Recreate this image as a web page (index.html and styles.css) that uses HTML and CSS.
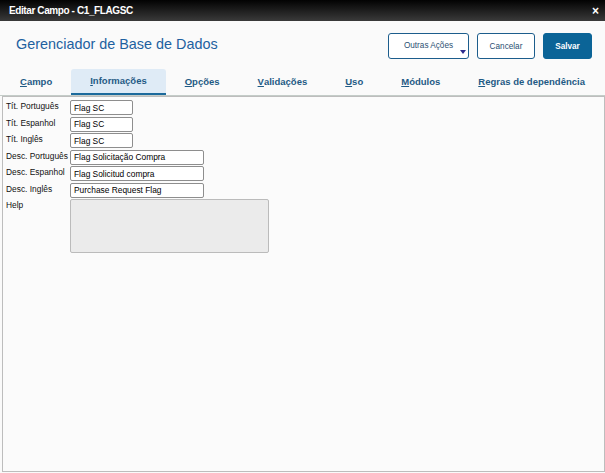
FILE: index.html
```html
<!DOCTYPE html>
<html lang="pt">
<head>
  <meta charset="UTF-8" />
  <title>Editar Campo - C1_FLAGSC</title>
  <link rel="stylesheet" href="styles.css">
</head>
<body>
  <div class="dialog">
    <div class="titlebar">
      <span class="title">Editar Campo - C1_FLAGSC</span>
      <span class="close">×</span>
    </div>

    <div class="header">
      <h1>Gerenciador de Base de Dados</h1>
      <div class="actions">
        <button class="btn btn-more">Outras Ações<span class="caret"></span></button>
        <button class="btn">Cancelar</button>
        <button class="btn btn-primary">Salvar</button>
      </div>
    </div>

    <ul class="tabs">
      <li><u>C</u>ampo</li>
      <li class="active"><u>I</u>nformações</li>
      <li><u>O</u>pções</li>
      <li><u>V</u>alidações</li>
      <li><u>U</u>so</li>
      <li><u>M</u>ódulos</li>
      <li><u>R</u>egras de dependência</li>
    </ul>

    <div class="panel">
      <div class="row"><label>Tít. Português</label><input class="short" value="Flag SC"></div>
      <div class="row"><label>Tít. Espanhol</label><input class="short" value="Flag SC"></div>
      <div class="row"><label>Tít. Inglês</label><input class="short" value="Flag SC"></div>
      <div class="row"><label>Desc. Português</label><input class="long" value="Flag Solicitação Compra"></div>
      <div class="row"><label>Desc. Espanhol</label><input class="long" value="Flag Solicitud compra"></div>
      <div class="row"><label>Desc. Inglês</label><input class="long" value="Purchase Request Flag"></div>
      <div class="row"><label>Help</label><textarea class="help"></textarea></div>
    </div>
  </div>
</body>
</html>
```

FILE: styles.css
```css
body {
  margin: 0;
  font-family: "Liberation Sans", Arial, sans-serif;
  background: #fafafa;
}

.dialog {
  width: 605px;
  height: 473px;
  display: flex;
  flex-direction: column;
  background: #fafafa;
}

.titlebar {
  height: 21px;
  display: flex;
  justify-content: space-between;
  align-items: center;
  padding: 0 6px 0 9px;
  background: linear-gradient(#020202, #3a3a3a);
  color: #fff;
}

.title {
  font-size: 10px;
  font-weight: bold;
  letter-spacing: -0.4px;
}

.close {
  font-size: 12px;
  font-weight: bold;
  line-height: 1;
}

.header {
  display: flex;
  justify-content: space-between;
  align-items: center;
  padding: 12px 13px 10px 16px;
}

.header h1 {
  margin: 0;
  font-size: 14.4px;
  font-weight: normal;
  color: #1d61a0;
  position: relative;
  top: -2px;
}

.actions {
  display: flex;
  gap: 8px;
}

.btn {
  height: 26px;
  padding: 0;
  border: 1px solid #1c5d8c;
  border-radius: 3px;
  background: #fff;
  color: #2b4f72;
  font-family: "Liberation Sans", Arial, sans-serif;
  font-size: 8.2px;
}

.btn-more {
  width: 81px;
  position: relative;
  padding-bottom: 2px;
}

.caret {
  position: absolute;
  right: 2px;
  bottom: 4px;
  border-left: 3px solid transparent;
  border-right: 3px solid transparent;
  border-top: 4px solid #2b2a8c;
}

.btn:nth-child(2) {
  width: 58px;
}

.btn-primary {
  width: 49px;
  background: #0b6497;
  border-color: #0b6497;
  color: #fff;
  font-weight: bold;
}

.tabs {
  list-style: none;
  margin: 0;
  padding: 0 0 0 1px;
  display: flex;
  height: 26px;
  border-bottom: 1px solid #c4ccc8;
}

.tabs li {
  padding: 0 19px;
  font-size: 9.5px;
  font-weight: bold;
  color: #1f5a85;
  white-space: nowrap;
  display: flex;
  align-items: center;
  border-radius: 3px 3px 0 0;
  padding-bottom: 2px;
}

.tabs li.active {
  background: #dfebf6;
  box-shadow: inset 0 -2px 0 #1c6a9c;
  padding-bottom: 4px;
}

.tabs u {
  text-decoration-thickness: 1px;
}

.panel {
  flex: 1;
  margin: 0 0 1px 2px;
  border: 1px solid #bdbdbd;
  background: #fbfbfb;
  padding: 3px 3px;
}

.row {
  display: flex;
  align-items: flex-start;
  margin-bottom: 1.5px;
}

.row label {
  width: 64px;
  font-size: 8.4px;
  color: #111;
  padding-top: 1px;
  white-space: nowrap;
}

.row input {
  box-sizing: border-box;
  height: 15px;
  margin: 0;
  padding: 0 0 0 3px;
  border: 1px solid #8e8e8e;
  border-radius: 2px;
  background: #fff;
  font-family: "Liberation Sans", Arial, sans-serif;
  font-size: 8.4px;
  color: #000;
}

.short {
  width: 63px;
}

.long {
  width: 134px;
}

.help {
  box-sizing: border-box;
  width: 199px;
  height: 54px;
  margin: 0;
  border: 1px solid #bbb;
  border-radius: 2px;
  background: #ebebeb;
  resize: none;
}
```
